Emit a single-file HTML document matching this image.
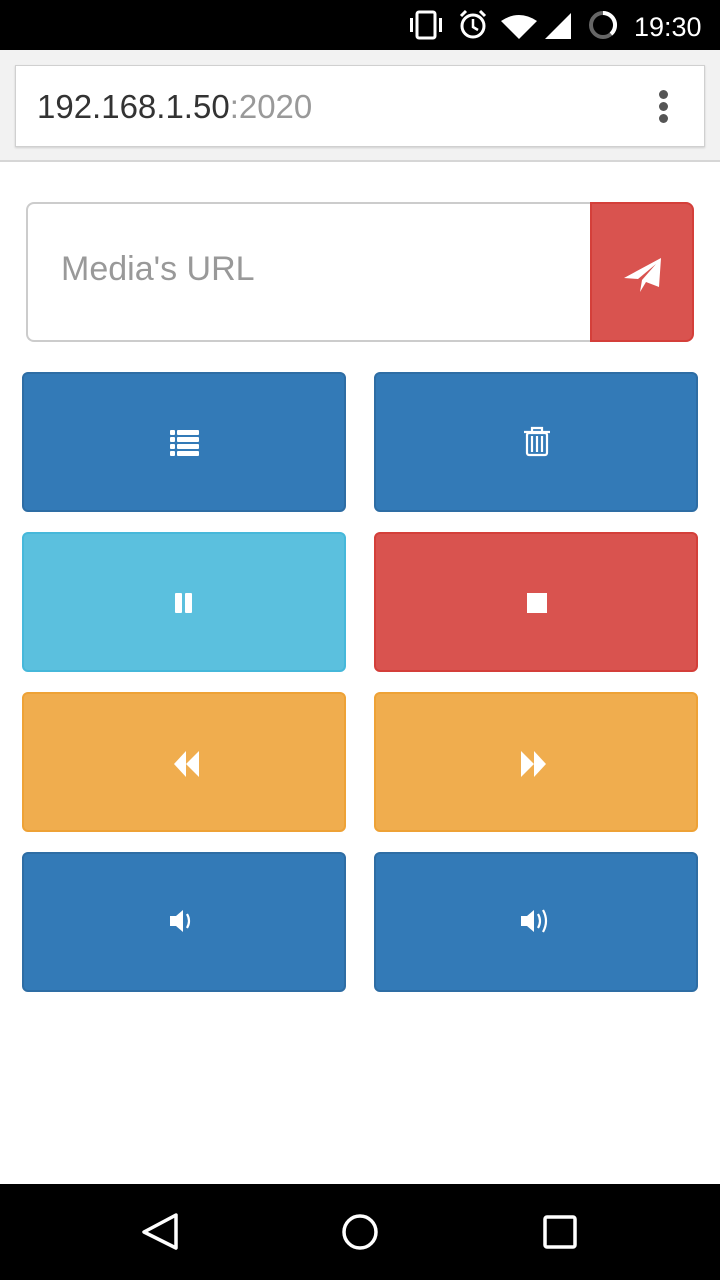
<!DOCTYPE html>
<html><head><meta charset="utf-8"><style>
*{margin:0;padding:0;box-sizing:border-box}
body{width:720px;height:1280px;background:#fff;position:relative;overflow:hidden;font-family:"Liberation Sans",sans-serif}
.a{position:absolute}
.btn{position:absolute;width:324px;height:140px;border-radius:6px;border:2px solid}
.p{background:#337ab7;border-color:#2e6da4}
.i{background:#5bc0de;border-color:#46b8da}
.d{background:#d9534f;border-color:#d43f3a}
.w{background:#f0ad4e;border-color:#eea236}
</style></head><body>
<div class="a" style="left:0;top:0;width:720px;height:50px;background:#000"></div>
<svg class="a" style="left:405px;top:8px" width="310" height="36" viewBox="405 8 310 36">
<g fill="#fff">
<rect x="417" y="12" width="18" height="26" rx="2" fill="none" stroke="#fff" stroke-width="3"/>
<rect x="410" y="18" width="3" height="14"/><rect x="439" y="18" width="3" height="14"/>
<circle cx="473" cy="26" r="11" fill="none" stroke="#fff" stroke-width="3"/>
<path d="M473 19v8l5 3" fill="none" stroke="#fff" stroke-width="2.5"/>
<path d="M461 16l5-5M485 16l-5-5" stroke="#fff" stroke-width="3"/>
<path d="M501 21q18-12 36 0l-18 18z"/>
<path d="M545 39l26-26v26z"/>
<circle cx="603" cy="25" r="12" fill="none" stroke="#666" stroke-width="4"/>
<path d="M603 13a12 12 0 0 1 8 21" fill="none" stroke="#fff" stroke-width="4"/>
</g>
<text x="634" y="36" fill="#fff" font-size="27" font-family="Liberation Sans">19:30</text>
</svg>
<div class="a" style="left:0;top:50px;width:720px;height:112px;background:#f2f2f2;border-bottom:2px solid #d6d6d6"></div>
<div class="a" style="left:15px;top:65px;width:690px;height:82px;background:#fff;border:1px solid #d0d0d0;box-shadow:0 1px 2px rgba(0,0,0,.15)"></div>
<div class="a" style="left:37px;top:87px;font-size:33px;color:#333;line-height:40px">192.168.1.50<span style="color:#999">:2020</span></div>
<div class="a" style="left:659px;top:90px;width:9px;height:9px;border-radius:50%;background:#555"></div>
<div class="a" style="left:659px;top:102px;width:9px;height:9px;border-radius:50%;background:#555"></div>
<div class="a" style="left:659px;top:114px;width:9px;height:9px;border-radius:50%;background:#555"></div>

<div class="a" style="left:26px;top:202px;width:566px;height:140px;border:2px solid #ccc;border-right:none;border-radius:8px 0 0 8px"></div>
<div class="a" style="left:61px;top:249px;font-size:34px;color:#999;line-height:40px">Media's URL</div>
<div class="a" style="left:590px;top:202px;width:104px;height:140px;background:#d9534f;border:2px solid #d43f3a;border-radius:0 8px 8px 0"></div>
<svg class="a" style="left:622px;top:255px" width="40" height="40" viewBox="0 0 40 40"><path d="M2 23L39 3 37 32 24 27 18 37 20 25 34 9 16 24z" fill="#fff"/></svg>

<div class="btn p" style="left:22px;top:372px"></div>
<div class="btn p" style="left:374px;top:372px"></div>
<div class="btn i" style="left:22px;top:532px"></div>
<div class="btn d" style="left:374px;top:532px"></div>
<div class="btn w" style="left:22px;top:692px"></div>
<div class="btn w" style="left:374px;top:692px"></div>
<div class="btn p" style="left:22px;top:852px"></div>
<div class="btn p" style="left:374px;top:852px"></div>

<svg class="a" style="left:0;top:0" width="720" height="1000" fill="#fff">
<g><rect x="170" y="430" width="5" height="5" rx="1"/><rect x="177" y="430" width="22" height="5" rx="1"/>
<rect x="170" y="437" width="5" height="5" rx="1"/><rect x="177" y="437" width="22" height="5" rx="1"/>
<rect x="170" y="444" width="5" height="5" rx="1"/><rect x="177" y="444" width="22" height="5" rx="1"/>
<rect x="170" y="451" width="5" height="5" rx="1"/><rect x="177" y="451" width="22" height="5" rx="1"/></g>
<g fill="none" stroke="#fff" stroke-width="2.2"><path d="M524 432h26M532 432v-4h10v4"/><rect x="527" y="433" width="20" height="22" rx="2"/><path d="M532 436v16M537 436v16M542 436v16"/></g>
<rect x="175" y="593" width="7" height="20" rx="1"/><rect x="185" y="593" width="7" height="20" rx="1"/>
<rect x="527" y="593" width="20" height="20"/>
<path d="M174 764l12-13v26zM186 764l13-13v26z"/>
<path d="M521 751l13 13-13 13zM534 751l12 13-12 13z"/>
<path d="M170 916h6l7-6v22l-7-6h-6z"/><path d="M187 914q4 7 0 14" fill="none" stroke="#fff" stroke-width="2.2"/>
<path d="M521 916h6l7-6v22l-7-6h-6z"/><path d="M538 914q4 7 0 14M543 910q6 11 0 22" fill="none" stroke="#fff" stroke-width="2.2"/>
</svg>

<div class="a" style="left:0;top:1184px;width:720px;height:96px;background:#000"></div>
<svg class="a" style="left:0;top:1184px" width="720" height="96" fill="none" stroke="#fff" stroke-width="3.5">
<path d="M176 31L144 48 176 64z" stroke-linejoin="round"/>
<circle cx="360" cy="48" r="16"/>
<rect x="545" y="33" width="30" height="30" rx="2"/>
</svg>
</body></html>
